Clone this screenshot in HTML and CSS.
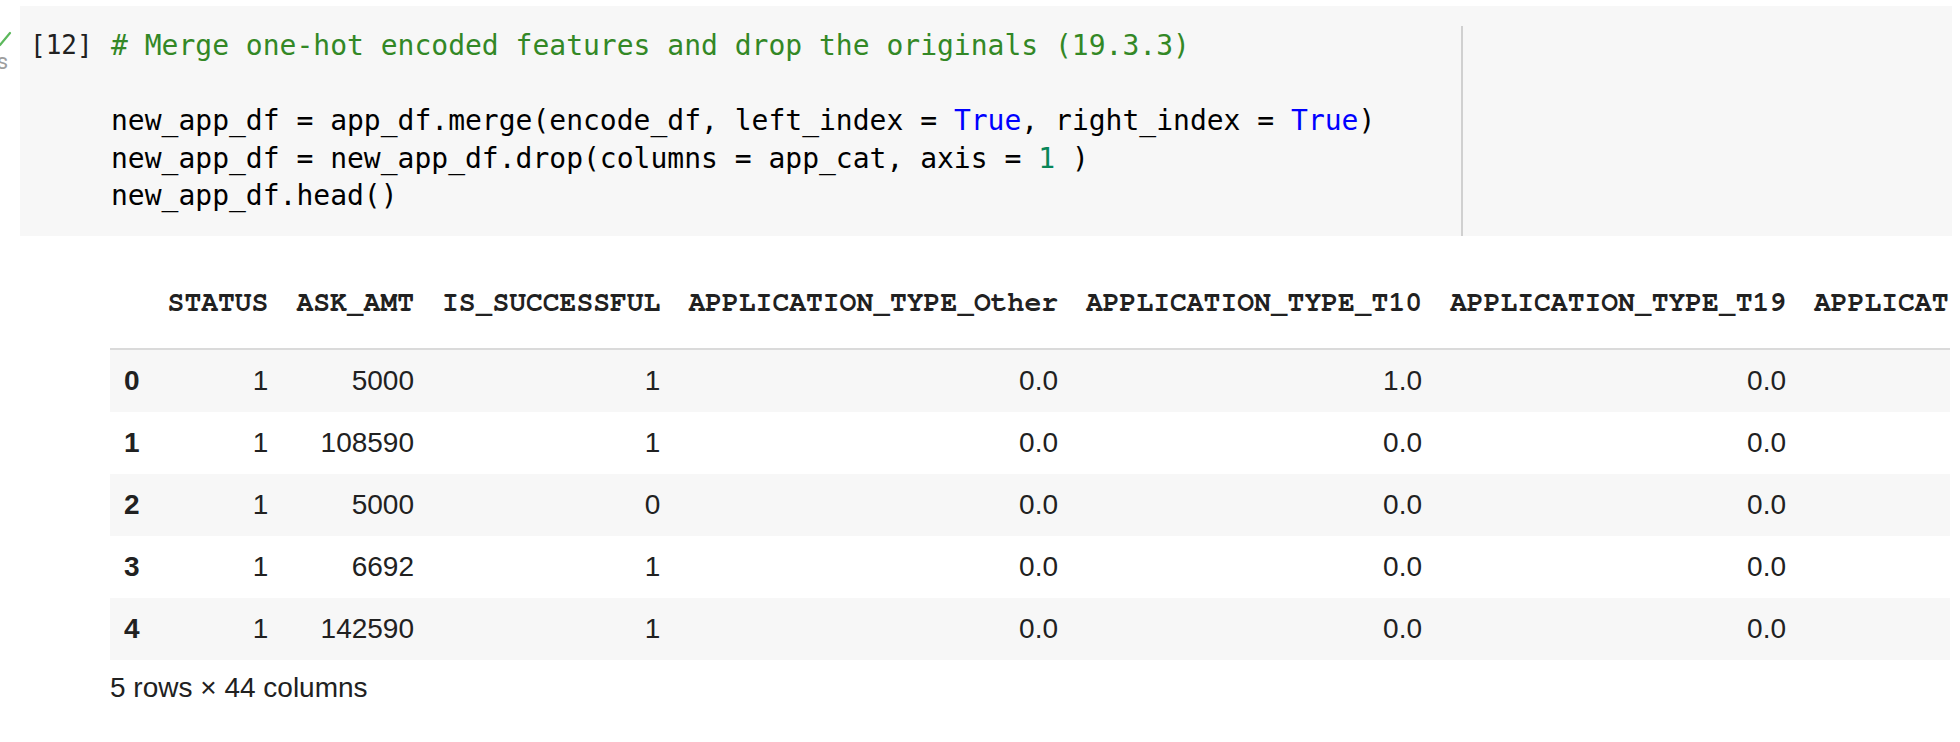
FILE: index.html
```html
<!DOCTYPE html>
<html lang="en">
<head>
<meta charset="utf-8">
<title>Notebook cell</title>
<link rel="stylesheet" href="styles.css">
</head>
<body>
<div class="cell">
  <div class="gutter">
    <svg class="check" viewBox="0 0 20 20" aria-hidden="true"><path d="M-8 7 L0 15 L10 3" fill="none" stroke="#5cb85c" stroke-width="2.2" stroke-linecap="round" stroke-linejoin="round"/></svg>
    <div class="time"><span>0s</span></div>
  </div>
  <div class="code-cell">
    <div class="exec-count">[12]</div>
    <div class="editor">
<pre class="code"><span class="c-comment"># Merge one-hot encoded features and drop the originals (19.3.3)</span>

new_app_df = app_df.merge(encode_df, left_index = <span class="c-const">True</span>, right_index = <span class="c-const">True</span>)
new_app_df = new_app_df.drop(columns = app_cat, axis = <span class="c-num">1</span> )
new_app_df.head()</pre>
    </div>
  </div>
</div>
<div class="output">
  <div class="table-wrap">
    <table class="df">
      <thead>
        <tr><th></th><th>STATUS</th><th>ASK_AMT</th><th>IS_SUCCESSFUL</th><th>APPLICATION_TYPE_Other</th><th>APPLICATION_TYPE_T10</th><th>APPLICATION_TYPE_T19</th><th>APPLICATION_TYPE_T3</th></tr>
      </thead>
      <tbody>
        <tr><th>0</th><td>1</td><td>5000</td><td>1</td><td>0.0</td><td>1.0</td><td>0.0</td><td>0.0</td></tr>
        <tr><th>1</th><td>1</td><td>108590</td><td>1</td><td>0.0</td><td>0.0</td><td>0.0</td><td>0.0</td></tr>
        <tr><th>2</th><td>1</td><td>5000</td><td>0</td><td>0.0</td><td>0.0</td><td>0.0</td><td>0.0</td></tr>
        <tr><th>3</th><td>1</td><td>6692</td><td>1</td><td>0.0</td><td>0.0</td><td>0.0</td><td>0.0</td></tr>
        <tr><th>4</th><td>1</td><td>142590</td><td>1</td><td>0.0</td><td>0.0</td><td>0.0</td><td>0.0</td></tr>
      </tbody>
    </table>
  </div>
  <p class="shape">5 rows × 44 columns</p>
</div>
</body>
</html>
```

FILE: styles.css
```css
* { box-sizing: border-box; }
html, body { margin: 0; background: #ffffff; }
body {
  padding-top: 6px;
  width: 1960px;
  height: 742px;
  overflow: hidden;
  font-family: "Liberation Sans", Arial, sans-serif;
  color: #212121;
}
.cell { display: flex; }
.gutter {
  width: 20px;
  flex: none;
  padding-top: 24px;
  overflow: hidden;
}
.check { display: block; width: 20px; height: 20px; overflow: visible; }
.time {
  display: flex;
  justify-content: flex-end;
  width: 8px;
  margin-top: 1px;
  font: 22px/22px Roboto, sans-serif;
  color: #9e9e9e;
  overflow: hidden;
  white-space: nowrap;
}
.code-cell {
  width: 1932px;
  height: 230px;
  flex: none;
  background: #f7f7f7;
  display: flex;
  padding-top: 20px;
}
.exec-count {
  width: 91px;
  flex: none;
  padding-left: 10px;
  padding-top: 1px;
  font: 26px/37.5px "DejaVu Sans Mono", monospace;
  color: #212121;
}
.editor {
  flex: none;
  width: 1352px;
  border-right: 2px solid #d0d0d0;
}
.code {
  margin: 0;
  padding-top: 1px;
  font: 28px/37.5px "DejaVu Sans Mono", monospace;
  color: #000000;
  white-space: pre;
}
.c-comment { color: #338826; }
.c-const { color: #0000ff; }
.c-num { color: #098658; }

.output { padding-left: 110px; padding-top: 36px; }
.table-wrap { width: 1840px; overflow: hidden; }
.df {
  border-collapse: separate;
  border-spacing: 0;
  white-space: nowrap;
}
.df thead th {
  font: bold 28px/34px "Courier 10 Pitch", "Nimbus Mono PS", "FreeMono", "Liberation Mono", "Courier New", monospace;
  padding: 14px 14px 28px;
  text-align: right;
  vertical-align: bottom;
  border-bottom: 2px solid #dadada;
  color: #212121;
}
.df tbody th,
.df tbody td {
  font: 28px/34px "Liberation Sans", Arial, sans-serif;
  padding: 14px;
  text-align: right;
  color: #212121;
}
.df tbody th { font-weight: bold; text-align: left; }
.df tbody tr:nth-child(odd) { background: #f7f7f7; }
.shape {
  margin: 11px 0 0;
  font: 28px/34px "Liberation Sans", Arial, sans-serif;
  color: #212121;
}
```
